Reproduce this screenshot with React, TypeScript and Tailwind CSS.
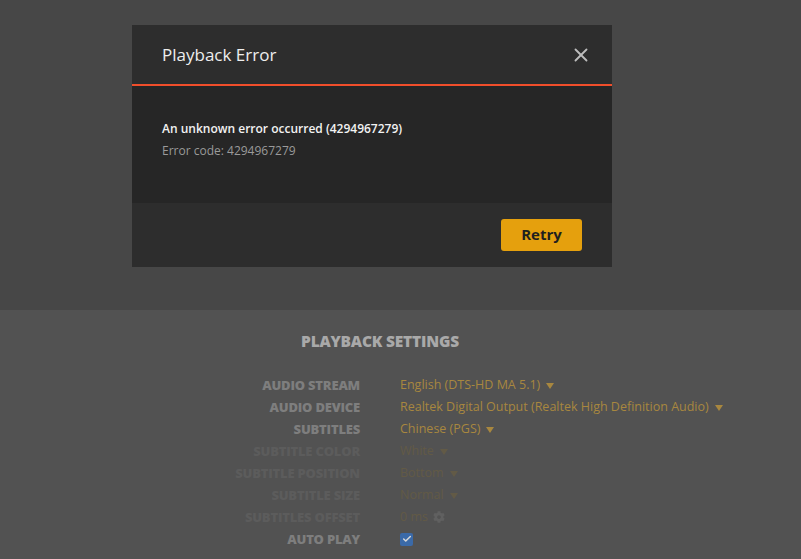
import { X, Check } from "lucide-react";
import { FaCog } from "react-icons/fa";

type Row = {
  label: string;
  value?: string;
  dim?: boolean;
  kind?: "select" | "offset" | "check";
};

const rows: Row[] = [
  { label: "Audio Stream", value: "English (DTS-HD MA 5.1)" },
  { label: "Audio Device", value: "Realtek Digital Output (Realtek High Definition Audio)" },
  { label: "Subtitles", value: "Chinese (PGS)" },
  { label: "Subtitle Color", value: "White", dim: true },
  { label: "Subtitle Position", value: "Bottom", dim: true },
  { label: "Subtitle Size", value: "Normal", dim: true },
  { label: "Subtitles Offset", value: "0 ms", dim: true, kind: "offset" },
  { label: "Auto Play", kind: "check" },
];

function Caret({ dim }: { dim?: boolean }) {
  return (
    <svg width="8" height="6" viewBox="0 0 8 6" className="ml-[6px] mt-[1px]">
      <path d="M0 0h8L4 6z" fill={dim ? "#625a46" : "#a8873f"} />
    </svg>
  );
}

function PlaybackError() {
  return (
    <div className="w-[480px]">
      <div className="h-[61px] bg-[#2d2d2d] flex items-center justify-between pl-[30px] pr-[20px] border-b-2 border-[#f04e2b]">
        <h2 className="text-[17px] text-[#eeeeee]">Playback Error</h2>
        <X className="w-[22px] h-[22px] text-[#bdbdbd]" strokeWidth={2} />
      </div>
      <div className="h-[117px] bg-[#262626] pl-[30px] pt-[33px]">
        <p className="text-[12px] font-semibold text-[#f2f2f2] leading-[20px]">
          An unknown error occurred (4294967279)
        </p>
        <p className="text-[12px] text-[#9a9a9a] leading-[20px] mt-[2px]">Error code: 4294967279</p>
      </div>
      <div className="h-[64px] bg-[#2d2d2d] flex items-center justify-end pr-[30px]">
        <button className="w-[81px] h-[32px] mt-[-1px] rounded-[3px] bg-[#e5a00d] text-[#1f1f1f] text-[15px] font-bold">
          Retry
        </button>
      </div>
    </div>
  );
}

export default function App() {
  return (
    <div className="w-[801px] h-[559px] overflow-hidden flex flex-col font-['Open_Sans',sans-serif]">
      <div className="h-[310px] bg-[#474747] pt-[25px] pl-[132px]">
        <PlaybackError />
      </div>
      <div className="flex-1 bg-[#525252]">
        <div className="grid grid-cols-[360px_1fr] gap-x-[40px]">
          <h3 className="col-span-2 text-center w-[760px] pt-[20px] text-[15.5px] font-extrabold uppercase text-[#a9a9a9] tracking-[-0.2px]">
            Playback Settings
          </h3>
          <div className="col-span-2 h-[21px]" />
          {rows.map((r) => (
            <div key={r.label} className="contents">
              <div
                className={`h-[22px] flex items-center justify-end text-[13px] font-extrabold uppercase tracking-[-0.2px] ${
                  r.dim ? "text-[#5c5c5c]" : "text-[#7e7e7e]"
                }`}
              >
                {r.label}
              </div>
              <div className="h-[22px] flex items-center text-[12.5px]">
                {r.kind === "check" ? (
                  <span className="w-[13px] h-[13px] rounded-[2px] bg-[#3b6aa8] flex items-center justify-center">
                    <Check className="w-[10px] h-[10px] text-[#d8d8d8]" strokeWidth={3.5} />
                  </span>
                ) : (
                  <>
                    <span className={r.dim ? "text-[#625a46]" : "text-[#a8873f]"}>{r.value}</span>
                    {r.kind === "offset" ? (
                      <FaCog className="w-[12px] h-[12px] ml-[5px] text-[#606060]" />
                    ) : (
                      <Caret dim={r.dim} />
                    )}
                  </>
                )}
              </div>
            </div>
          ))}
        </div>
      </div>
    </div>
  );
}
